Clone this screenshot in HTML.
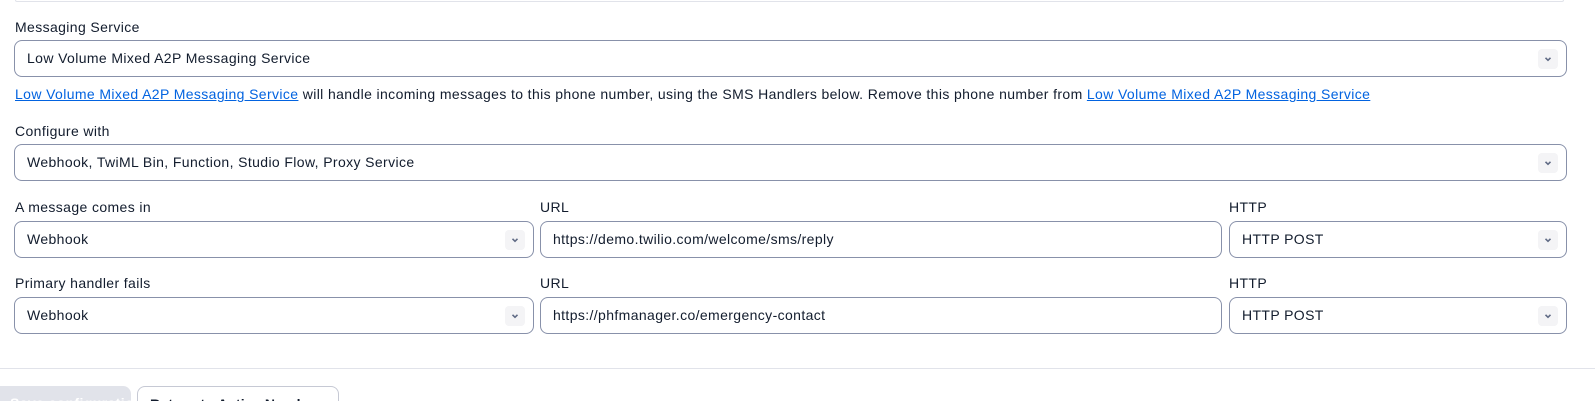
<!DOCTYPE html>
<html><head><meta charset="utf-8"><style>
*{box-sizing:border-box;margin:0;padding:0}
html,body{width:1595px;height:401px;overflow:hidden}
body{background:#fff;font-family:"Liberation Sans",sans-serif;font-size:14px;color:#121c2d;position:relative;letter-spacing:0.38px}
.a{position:absolute}
.lbl{position:absolute;line-height:16px;font-size:14px;white-space:nowrap}
.f{position:absolute;height:37px;border:1px solid #8891aa;border-radius:8px;background:#fff;padding-left:12px;line-height:35px;font-size:14px;white-space:nowrap}
.chev{position:absolute;right:8px;top:8px;width:20px;height:20px;background:#f4f4f6;border-radius:4px}
.chev svg{position:absolute;left:5px;top:5px}
a{color:#0263e0;text-decoration:underline}
</style></head><body>
<div class="a" style="left:15px;top:0;width:1549px;height:2px;border-bottom:1px solid #e1e3ea;border-left:1px solid #e1e3ea;border-right:1px solid #e1e3ea;border-radius:0 0 6px 6px"></div>

<div class="lbl" style="left:15px;top:19px">Messaging Service</div>
<div class="f" style="left:14px;top:40px;width:1553px">Low Volume Mixed A2P Messaging Service<div class="chev"><svg width="10" height="10" viewBox="0 0 10 10"><path d="M2.5 3.8L5 6.3L7.5 3.8" fill="none" stroke="#606b85" stroke-width="1.6"/></svg></div></div>
<div class="lbl" style="left:15px;top:86px"><a>Low Volume Mixed A2P Messaging Service</a> will handle incoming messages to this phone number, using the SMS Handlers below. Remove this phone number from <a>Low Volume Mixed A2P Messaging Service</a></div>

<div class="lbl" style="left:15px;top:123px">Configure with</div>
<div class="f" style="left:14px;top:144px;width:1553px">Webhook, TwiML Bin, Function, Studio Flow, Proxy Service<div class="chev"><svg width="10" height="10" viewBox="0 0 10 10"><path d="M2.5 3.8L5 6.3L7.5 3.8" fill="none" stroke="#606b85" stroke-width="1.6"/></svg></div></div>

<div class="lbl" style="left:15px;top:199px">A message comes in</div>
<div class="lbl" style="left:540px;top:199px">URL</div>
<div class="lbl" style="left:1229px;top:199px">HTTP</div>
<div class="f" style="left:14px;top:221px;width:520px">Webhook<div class="chev"><svg width="10" height="10" viewBox="0 0 10 10"><path d="M2.5 3.8L5 6.3L7.5 3.8" fill="none" stroke="#606b85" stroke-width="1.6"/></svg></div></div>
<div class="f" style="left:540px;top:221px;width:682px">https://demo.twilio.com/welcome/sms/reply</div>
<div class="f" style="left:1229px;top:221px;width:338px">HTTP POST<div class="chev"><svg width="10" height="10" viewBox="0 0 10 10"><path d="M2.5 3.8L5 6.3L7.5 3.8" fill="none" stroke="#606b85" stroke-width="1.6"/></svg></div></div>

<div class="lbl" style="left:15px;top:275px">Primary handler fails</div>
<div class="lbl" style="left:540px;top:275px">URL</div>
<div class="lbl" style="left:1229px;top:275px">HTTP</div>
<div class="f" style="left:14px;top:297px;width:520px">Webhook<div class="chev"><svg width="10" height="10" viewBox="0 0 10 10"><path d="M2.5 3.8L5 6.3L7.5 3.8" fill="none" stroke="#606b85" stroke-width="1.6"/></svg></div></div>
<div class="f" style="left:540px;top:297px;width:682px">https://phfmanager.co/emergency-contact</div>
<div class="f" style="left:1229px;top:297px;width:338px">HTTP POST<div class="chev"><svg width="10" height="10" viewBox="0 0 10 10"><path d="M2.5 3.8L5 6.3L7.5 3.8" fill="none" stroke="#606b85" stroke-width="1.6"/></svg></div></div>

<div class="a" style="left:0;top:368px;width:1595px;height:1px;background:#e1e3ea"></div>
<div class="a" style="left:0;top:386px;width:131px;height:15px;background:#e1e3ea;border-radius:0 8px 0 0;color:#fff;font-weight:bold;padding:9px 0 0 10px;white-space:nowrap;overflow:hidden;line-height:16px">Save configuration</div>
<div class="a" style="left:137px;top:386px;width:202px;height:15px;border:1px solid #c6c9d4;border-bottom:none;border-radius:8px 8px 0 0;font-weight:bold;padding:9px 0 0 12px;white-space:nowrap;overflow:hidden;letter-spacing:0.2px;line-height:16px">Return to Active Numbers</div>
</body></html>
